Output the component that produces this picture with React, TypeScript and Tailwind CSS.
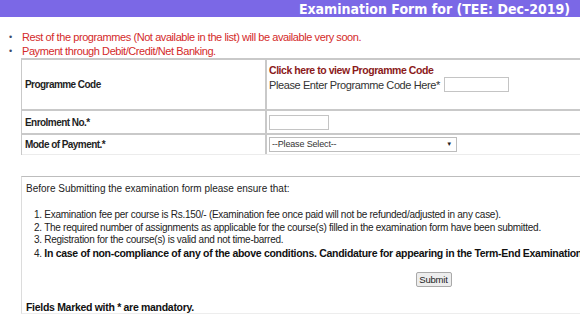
import React from "react";

const sans = "font-['Liberation_Sans',Arial,sans-serif]";

const notices: string[] = [
  "Rest of the programmes (Not available in the list) will be available very soon.",
  "Payment through Debit/Credit/Net Banking.",
];

const checks: string[] = [
  "Examination fee per course is Rs.150/- (Examination fee once paid will not be refunded/adjusted in any case).",
  "The required number of assignments as applicable for the course(s) filled in the examination form have been submitted.",
  "Registration for the course(s) is valid and not time-barred.",
];

const Label: React.FC<{ text: string }> = ({ text }) => (
  <div className="flex items-center pl-[3px] font-bold text-[10px] tracking-[-0.55px] text-[#1e1e1e] border-r-2 border-[#c9c9c9]">
    {text}
  </div>
);

const App: React.FC = () => {
  return (
    <div className={`w-[580px] h-[326px] overflow-hidden bg-white ${sans}`}>
      {/* title bar */}
      <div className="h-[17px] bg-[#7b68e6] flex items-center justify-end pr-[10px]">
        <span className="text-white font-bold text-[14px] leading-none font-['DejaVu_Sans_Condensed',Tahoma,sans-serif]">
          Examination Form for (TEE: Dec-2019)
        </span>
      </div>

      {/* notices */}
      <ul className="mt-[14px] pl-[9px] text-[11px] leading-[13.5px] tracking-[-0.42px] text-[#d42a2a] whitespace-nowrap">
        {notices.map((n) => (
          <li key={n} className="flex items-center">
            <span className="w-[13px] text-[#3b4a6b] text-[9px] tracking-normal">&#8226;</span>
            <span>{n}</span>
          </li>
        ))}
      </ul>

      {/* form table */}
      <div className="ml-[21px] w-[820px] border-t-2 border-l border-[#c9c9c9]">
        <div className="grid grid-cols-[245px_1fr] h-[51px] border-b-2 border-[#c9c9c9]">
          <Label text="Programme Code" />
          <div className="pl-[2px] pt-[3px] leading-[14px] whitespace-nowrap">
            <div className="font-bold text-[#8b1a1a] text-[10.5px] tracking-[-0.45px]">
              Click here to view Programme Code
            </div>
            <div className="flex items-center gap-[4px] text-[11px] tracking-[-0.4px] text-[#333]">
              <span>Please Enter Programme Code Here*</span>
              <div className="w-[65px] h-[15px] border border-[#c4c4c4] bg-white" />
            </div>
          </div>
        </div>
        <div className="grid grid-cols-[245px_1fr] h-[24px] border-b-2 border-[#c9c9c9]">
          <Label text="Enrolment No.*" />
          <div className="flex items-center pl-[2px]">
            <div className="w-[60px] h-[15px] border border-[#c4c4c4] bg-white" />
          </div>
        </div>
        <div className="grid grid-cols-[245px_1fr] h-[20px] border-b border-[#ececec]">
          <Label text="Mode of Payment.*" />
          <div className="flex items-center pl-[2px]">
            <div className="w-[188px] h-[15px] border border-[#bdbdbd] bg-white flex items-center justify-between pl-[2px] pr-[4px] text-[9px] tracking-[-0.15px] text-[#333]">
              <span>--Please Select--</span>
              <span className="text-[6px] text-[#222]">&#9660;</span>
            </div>
          </div>
        </div>
      </div>

      {/* instructions box */}
      <div className="ml-[21px] mt-[21px] w-[820px] h-[138px] border-t border-t-[#bdbdbd] border-l border-l-[#dcdcdc] border-b border-b-[#ededed] pl-[4px] text-[#222] whitespace-nowrap">
        <p className="mt-[5px] text-[10px] leading-[14px]">Before Submitting the examination form please ensure that:</p>
        <ol className="mt-[13px] pl-[8px] text-[10px] leading-[12.5px] tracking-[-0.27px]">
          {checks.map((c, i) => (
            <li key={i}>
              {i + 1}. {c}
            </li>
          ))}
          <li>
            4.{" "}
            <span className="font-bold text-[10.5px] tracking-[-0.3px] text-[#111]">
              In case of non-compliance of any of the above conditions. Candidature for appearing in the Term-End Examination will be cancelled.
            </span>
          </li>
        </ol>
        <div className="flex justify-center mt-[12px]">
          <button className="h-[15px] w-[36px] border border-[#a9a9a9] bg-[#ededed] rounded-[2px] text-[9.5px] tracking-[-0.2px] leading-none text-[#222]">
            Submit
          </button>
        </div>
        <p className="mt-[13px] font-bold text-[10.5px] leading-[14px] tracking-[-0.3px] text-[#111]">
          Fields Marked with * are mandatory.
        </p>
      </div>
    </div>
  );
};

export default App;
